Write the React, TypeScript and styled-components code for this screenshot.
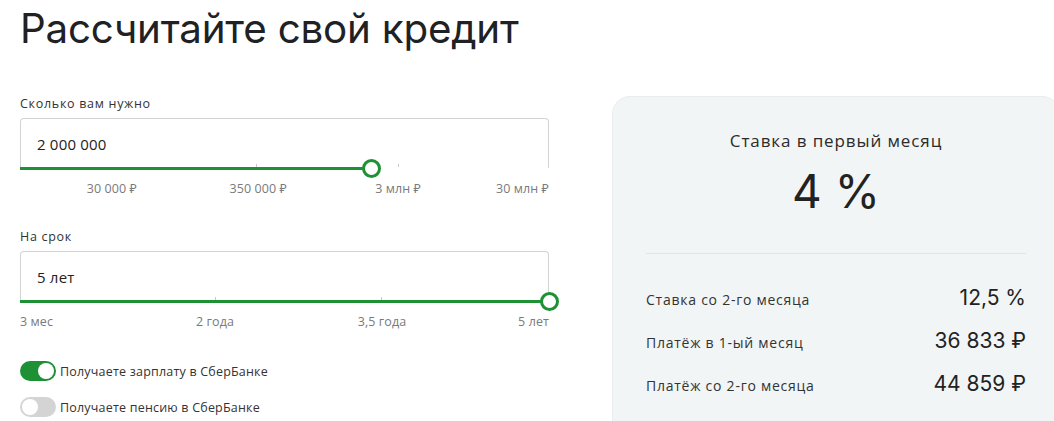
import * as React from 'react';
import styled, { createGlobalStyle } from 'styled-components';

const GlobalStyle = createGlobalStyle`
  html, body {
    margin: 0;
    padding: 0;
    overflow: hidden;
    background: #fff;
  }
  body {
    font-family: 'Open Sans', 'Noto Sans', sans-serif;
    color: #1f1f22;
  }
`;

const GREEN = '#1e9134';

type Mark = { text: string; align: 'start' | 'center' | 'end' };

type SliderFieldProps = {
  label: string;
  value: string;
  percent: number;
  ticks: number[];
  cols: string;
  marks: Mark[];
};

const Page = styled.div`
  padding: 0 0 0 20px;
  width: 1100px;
`;

const Title = styled.h1`
  margin: 0;
  padding-top: 4px;
  font-family: Inter, 'Noto Sans', sans-serif;
  font-weight: 400;
  font-size: 40.3px;
  line-height: 50px;
  letter-spacing: -0.2px;
  color: #202124;
`;

const Columns = styled.div`
  display: flex;
  gap: 63px;
  margin-top: 41px;
`;

const LeftColumn = styled.div`
  width: 529px;
  display: flex;
  flex-direction: column;
`;

const FieldBlock = styled.div`
  display: flex;
  flex-direction: column;
  margin-bottom: 31px;
`;

const FieldLabel = styled.div`
  font-size: 12.5px;
  line-height: 17px;
  letter-spacing: 0.7px;
  color: #333;
  margin-bottom: 6px;
`;

const InputBox = styled.div`
  height: 50px;
  box-sizing: border-box;
  border: 1px solid #d3d3d3;
  border-bottom: none;
  border-radius: 4px 4px 0 0;
  display: flex;
  align-items: center;
  padding: 0 16px;
  font-size: 15px;
  letter-spacing: 0.2px;
  color: #222;
`;

const Track = styled.div`
  position: relative;
  height: 3px;
  margin-top: -1px;
`;

const Fill = styled.div`
  height: 3px;
  background: ${GREEN};
`;

const Tick = styled.div`
  position: absolute;
  bottom: 3px;
  width: 1px;
  height: 3px;
  background: #c8c8c8;
`;

const Knob = styled.div`
  position: absolute;
  top: 50%;
  width: 13px;
  height: 13px;
  margin: -9.5px 0 0 -9.5px;
  border: 3px solid ${GREEN};
  border-radius: 50%;
  background: #fff;
`;

const Scale = styled.div<{ $cols: string }>`
  display: grid;
  grid-template-columns: ${(p) => p.$cols};
  margin-top: 10px;
  font-size: 12.5px;
  line-height: 17px;
  letter-spacing: 0.1px;
  color: #7a7a7a;
`;

const ScaleMark = styled.span<{ $align: Mark['align'] }>`
  justify-self: ${(p) => p.$align};
  white-space: nowrap;
`;

const Toggles = styled.div`
  display: flex;
  flex-direction: column;
  gap: 16px;
  margin-top: 0;
`;

const ToggleRow = styled.label`
  display: flex;
  align-items: center;
  gap: 4px;
  font-size: 12.5px;
  letter-spacing: 0.2px;
  color: #333;
`;

const Switch = styled.span<{ $on: boolean }>`
  position: relative;
  width: 36px;
  height: 20px;
  border-radius: 10px;
  background: ${(p) => (p.$on ? GREEN : '#d4d4d4')};

  &:after {
    content: '';
    position: absolute;
    top: 2px;
    left: ${(p) => (p.$on ? '18px' : '2px')};
    width: 16px;
    height: 16px;
    border-radius: 50%;
    background: #fff;
  }
`;

const Card = styled.div`
  width: 448px;
  height: 340px;
  box-sizing: border-box;
  margin-top: 1px;
  padding: 33px 33px 0;
  background: #f2f5f6;
  border: 1px solid #e9edef;
  border-radius: 18px 18px 0 0;
  display: flex;
  flex-direction: column;
`;

const CardCaption = styled.div`
  text-align: center;
  font-size: 17px;
  line-height: 22px;
  letter-spacing: 0.9px;
  color: #2b2b2b;
`;

const BigRate = styled.div`
  text-align: center;
  font-family: Inter, 'Noto Sans', sans-serif;
  font-size: 46px;
  line-height: 56px;
  margin-top: 11px;
  color: #222;
`;

const Divider = styled.hr`
  border: none;
  border-top: 1px solid #dfe4e6;
  margin: 34px 0 22px;
`;

const ResultRow = styled.div`
  display: flex;
  justify-content: space-between;
  align-items: center;
  height: 43px;
`;

const ResultName = styled.span`
  font-size: 14px;
  letter-spacing: 0.75px;
  color: #333;
  padding-top: 4px;
`;

const ResultValue = styled.span`
  font-family: Inter, 'Noto Sans', sans-serif;
  font-size: 21px;
  color: #222;
`;

const SliderField = ({ label, value, percent, ticks, cols, marks }: SliderFieldProps) => (
  <FieldBlock>
    <FieldLabel>{label}</FieldLabel>
    <InputBox>{value}</InputBox>
    <Track>
      <Fill style={{ width: `${percent}%` }} />
      {ticks.map((t) => (
        <Tick key={t} style={{ left: `${t}%` }} />
      ))}
      <Knob style={{ left: `${percent}%` }} />
    </Track>
    <Scale $cols={cols}>
      {marks.map((m) => (
        <ScaleMark key={m.text} $align={m.align}>
          {m.text}
        </ScaleMark>
      ))}
    </Scale>
  </FieldBlock>
);

const results = [
  { name: 'Ставка со 2-го месяца', value: '12,5 %' },
  { name: 'Платёж в 1-ый месяц', value: '36 833 ₽' },
  { name: 'Платёж со 2-го месяца', value: '44 859 ₽' },
];

export default function App() {
  return (
    <Page>
      <GlobalStyle />
      <Title>Рассчитайте свой кредит</Title>
      <Columns>
        <LeftColumn>
          <SliderField
            label="Сколько вам нужно"
            value="2 000 000"
            percent={66.4}
            ticks={[44.6, 71.5]}
            cols="117px 150px 134px 1fr"
            marks={[
              { text: '30 000 ₽', align: 'end' },
              { text: '350 000 ₽', align: 'end' },
              { text: '3 млн ₽', align: 'end' },
              { text: '30 млн ₽', align: 'end' },
            ]}
          />
          <SliderField
            label="На срок"
            value="5 лет"
            percent={100}
            ticks={[36.9, 68.3]}
            cols="100px 190px 144px 1fr"
            marks={[
              { text: '3 мес', align: 'start' },
              { text: '2 года', align: 'center' },
              { text: '3,5 года', align: 'center' },
              { text: '5 лет', align: 'end' },
            ]}
          />
          <Toggles>
            <ToggleRow>
              <Switch $on />
              Получаете зарплату в СберБанке
            </ToggleRow>
            <ToggleRow>
              <Switch $on={false} />
              Получаете пенсию в СберБанке
            </ToggleRow>
          </Toggles>
        </LeftColumn>
        <Card>
          <CardCaption>Ставка в первый месяц</CardCaption>
          <BigRate>4 %</BigRate>
          <Divider />
          {results.map((r) => (
            <ResultRow key={r.name}>
              <ResultName>{r.name}</ResultName>
              <ResultValue>{r.value}</ResultValue>
            </ResultRow>
          ))}
        </Card>
      </Columns>
    </Page>
  );
}
